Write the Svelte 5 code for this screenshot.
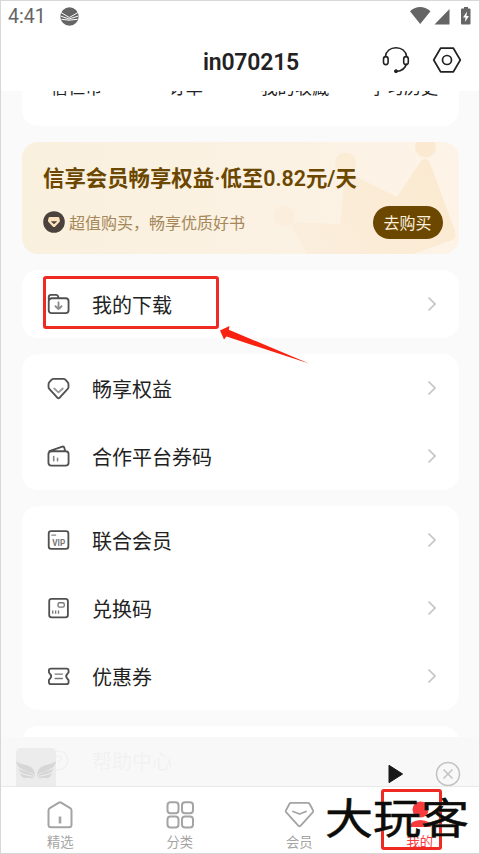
<script>
    const shortcuts = ['信仁币', '订单', '我的收藏', '学习历史'];

    const groups = [
        [{ icon: 'download', label: '我的下载' }],
        [
            { icon: 'diamond', label: '畅享权益' },
            { icon: 'wallet', label: '合作平台券码' }
        ],
        [
            { icon: 'vip', label: '联合会员' },
            { icon: 'code', label: '兑换码' },
            { icon: 'coupon', label: '优惠券' }
        ],
        [{ icon: 'help', label: '帮助中心' }]
    ];

    const tabs = [
        { icon: 'home', label: '精选' },
        { icon: 'grid', label: '分类' },
        { icon: 'member', label: '会员' },
        { icon: 'me', label: '我的', active: true }
    ];
</script>

{#snippet wing()}
    <path d="M0 0c4 4 12 3 16 7 2 2 3 4 3 9-1-3-3-4-6-5C7 9 1 7 0 0z" />
    <path d="M2 7c3 3 9 3 12 5 3 1 4 3 4 5-3-4-6-3-9-4-4-1-6-3-7-6z" />
    <path d="M4 12c3 2 6 2 9 3 2 0 4 1 4 3-3-2-5-1-7-1-4 0-5-2-6-5z" />
{/snippet}

<div class="screen">
    <header>
        <div class="status">
            <span class="time">4:41</span>
            <svg viewBox="0 0 19 19" width="19" height="19">
                <circle cx="9.5" cy="9.5" r="9.2" fill="#656565" />
                <path d="M1 5.500L9.300 10.500 18 5.500M.5 9l8.500 3 9.500-3M1.500 12.300l7.500.9 8.500-.9" fill="none" stroke="#fff" stroke-width="1" />
            </svg>
            <svg class="signals" viewBox="0 0 62 20" width="62" height="20">
                <path fill="#656565" d="M0 5.2Q10 -3 20.500 5.200L10.200 18zM24.500 18.500L39.500 3v15.500zM52 2.500h2V1h4v1.500h1.500q1 0 1 1v14q0 1-1 1h-7.500q-1 0-1-1v-14q0-1 1-1z" />
                <path fill="#fff" d="M57 5.500L53 11.500h2.500l-.5 4.500 4-6h-2.500z" />
            </svg>
        </div>
        <div class="titlebar">
            <h1>in070215</h1>
            <svg class="headset" viewBox="0 0 28 28" width="28" height="28" fill="none" stroke="#222" stroke-width="1.600">
                <path d="M3.200 11C4 5 8.500 1.800 14 1.800S24 5 24.800 11M24.600 17.500c-1.200 4.600-4.600 7.500-10.200 8" />
                <rect x="1.500" y="10.600" width="4.600" height="8" rx="2.300" />
                <rect x="21.700" y="10.600" width="4.600" height="8" rx="2.300" />
                <circle cx="14" cy="25.200" r="1.500" fill="#222" stroke-width="1" />
            </svg>
            <svg viewBox="0 0 30 28" width="30" height="28" fill="none" stroke="#222" stroke-width="1.700" stroke-linejoin="round">
                <path d="M8.600 2.200h12.800L28.300 14l-6.900 11.800H8.600L1.700 14z" />
                <circle cx="15" cy="14" r="4.500" />
            </svg>
        </div>
    </header>

    <main>
        <section class="card shortcuts">
            {#each shortcuts as name}
                <span>{name}</span>
            {/each}
        </section>

        <section class="banner">
            <svg class="crown" viewBox="0 0 186 112" width="186" height="112">
                <defs>
                    <linearGradient id="crown" gradientUnits="userSpaceOnUse" x1="20" y1="100" x2="150" y2="10">
                        <stop offset="0" stop-color="#fbeedd" />
                        <stop offset="1" stop-color="#fbead1" />
                    </linearGradient>
                </defs>
                <g fill="url(#crown)">
                    <path d="M16 80l51 2 5-50q3-3 8 1l44 22 24-36q5-5 9 2l25 68q2 8-5 10L140 112H34z" />
                    <circle cx="11" cy="74" r="10.500" />
                    <circle cx="72.500" cy="21" r="10.500" />
                    <circle cx="152.500" cy="5" r="10.500" />
                </g>
            </svg>
            <h2>信享会员畅享权益·低至0.82元/天</h2>
            <div class="offer">
                <svg viewBox="0 0 22 22" width="22" height="22">
                    <circle cx="11" cy="11" r="10.800" fill="#4b423d" />
                    <path fill="#fce3bd" fill-rule="evenodd" d="M7 6h8q1 0 1.300.8l.6 2.700q.2.800-.5 1.500L12 15.700q-1 .8-2 0L5.500 11q-.7-.7-.5-1.500l.6-2.700Q6 6 7 6zM7.800 10.200L11 13.300l3.200-3.100z" />
                </svg>
                <span>超值购买，畅享优质好书</span>
                <button>去购买</button>
            </div>
        </section>

        {#each groups as group}
            <section class="card">
                {#each group as item}
                    <div class="row">
                        <svg class="icon" viewBox="0 0 24 24" width="23" height="23" fill="none" stroke="#505050" stroke-width="1.900" stroke-linejoin="round" stroke-linecap="round">
                            {#if item.icon === 'download'}
                                <path d="M1.800 6.500V4.500q0-2.500 2.500-2.500h5.200q1.500 0 2 1.300l.8 2.200h7.200q3 0 3 3v9.500q0 3-3 3H4.800q-3 0-3-3V8.500q0-2.500 3-3h7" />
                                <path stroke="#8b8b8b" d="M12 9.500v7M8.800 13.800l3.200 3 3.200-3" />
                            {:else if item.icon === 'diamond'}
                                <path d="M6.800 2h10.400q1.200 0 2 .8l2.300 2.600q.9 1 .9 2.200v3q0 1-.8 1.700L13 21.800q-1 .9-2 0L2.400 12.300q-.8-.7-.8-1.700v-3q0-1.200.9-2.200l2.300-2.600q.8-.8 2-.8z" />
                                <path stroke="#999" d="M7.500 12L12 16l4.500-4" />
                            {:else if item.icon === 'wallet'}
                                <path d="M2.500 6.500L16 1.700q1.500-.4 2 1L19 6.500M5 6.500h14.500q3 0 3 3v9q0 3-3 3h-15q-3 0-3-3v-9q0-3 3.500-3z" />
                                <path stroke="#888" stroke-width="1.700" d="M7 12v4.500M11 14v2.500" />
                            {:else if item.icon === 'vip'}
                                <rect x="1.800" y="2.300" width="20.500" height="18.500" rx="2.500" />
                                <path stroke="#888" stroke-width="1.300" d="M5 6.500h4" />
                                <text x="12.300" y="17.700" text-anchor="middle">VIP</text>
                            {:else if item.icon === 'code'}
                                <rect x="2.300" y="2" width="19.500" height="19.200" rx="2.500" />
                                <rect stroke="#777" stroke-width="1.400" x="11.500" y="6" width="6.500" height="4.500" rx="1.500" />
                                <path stroke="#777" stroke-width="1.400" stroke-linecap="butt" d="M6 14v3.500M9 14v3.500M12 14v3.500" />
                            {:else if item.icon === 'coupon'}
                                <path d="M4 3.800h16.500q2 0 2 2v2l-1.500 1.700q-2 2.200 0 4.400l1.500 1.800v2.200q0 2-2 2H4q-2 0-2-2v-2.200l1.400-1.800q2-2.200 0-4.400L2 7.800v-2q0-2 2-2z" />
                                <path stroke="#777" stroke-width="1.500" d="M8.500 9.500h7.500M8.500 14h7.500" />
                            {:else}
                                <circle cx="12" cy="12" r="9.800" />
                                <path d="M9 10q0-3 3-3t3 3q0 1.500-3 3v1" />
                            {/if}
                        </svg>
                        <span>{item.label}</span>
                        <svg class="chevron" viewBox="0 0 10 16" width="10" height="16">
                            <path d="M1.500 1.500L8 8l-6.500 6.500" fill="none" stroke="#c4c4c4" stroke-width="1.700" />
                        </svg>
                    </div>
                {/each}
            </section>
        {/each}
    </main>

    <footer>
        <div class="player">
            <div class="cover">
                <svg viewBox="0 0 40 20" width="40" height="20" fill="#d6d6d6">
                    {@render wing()}
                    <g transform="translate(40 0) scale(-1 1)">{@render wing()}</g>
                </svg>
            </div>
            <svg class="play" viewBox="0 0 16 20" width="16" height="20">
                <path d="M1 1.300L14.600 10 1 18.700z" fill="#181818" stroke="#181818" stroke-width="1" stroke-linejoin="round" />
            </svg>
            <svg class="close" viewBox="0 0 26 26" width="26" height="26" fill="none" stroke="#c2c2c2" stroke-width="1.500">
                <circle cx="13" cy="13" r="11.500" />
                <path d="M8.500 8.500l9 9M17.500 8.500l-9 9" />
            </svg>
        </div>
        <nav>
            {#each tabs as tab}
                <div class="tab" class:active={tab.active}>
                    <svg viewBox="0 0 30 30" width="30" height="30" fill="none" stroke="#a4a4a4" stroke-width="2" stroke-linejoin="round" stroke-linecap="round">
                        {#if tab.icon === 'home'}
                            <path d="M3.500 10.500q0-1.500 1.300-2.300l8.700-5.400q1.500-.9 3 0l8.700 5.400q1.300.8 1.300 2.300v14.300q0 2.500-2.500 2.500H6q-2.500 0-2.500-2.500z" />
                            <path stroke-width="2.600" stroke-linecap="butt" d="M15 16.500v7" />
                        {:else if tab.icon === 'grid'}
                            <rect x="2.500" y="2.300" width="11" height="11" rx="3" />
                            <rect x="17" y="2.300" width="11" height="11" rx="3" />
                            <rect x="2.500" y="16.500" width="11" height="11" rx="3" />
                            <rect x="17" y="16.500" width="11" height="11" rx="3" />
                        {:else if tab.icon === 'member'}
                            <path stroke-width="1.800" d="M7 2.900h17q1 0 1.500.8l3.500 6.500q.7 1.200-.3 2.200L16.500 25.800q-1 1-2 0L2.300 12.400q-1-1-.3-2.200l3.500-6.500q.5-.8 1.500-.8z" />
                            <path stroke-width="1.800" d="M9 11.500l6.500 2.500 6.500-2.500" />
                        {:else}
                            <circle cx="15.500" cy="9.500" r="8" fill="#f93b3e" stroke="none" />
                            <path d="M5 27q0-6.500 10.500-7 10.500.5 10.500 7z" fill="#f93b3e" stroke="none" />
                        {/if}
                    </svg>
                    <span>{tab.label}</span>
                </div>
            {/each}
        </nav>
    </footer>

    <div class="mark row-mark"></div>
    <svg class="arrow" viewBox="0 0 90 42" width="90" height="42">
        <path fill="#f9210f" d="M0 4.500L9.500 0l-.7 3.700L89 37.500 6.500 10.500 4 13.500z" />
    </svg>
    <div class="mark tab-mark"></div>
    <div class="watermark">大玩客</div>
</div>

<style>
    :global(body) {
        margin: 0;
    }

    .screen {
        position: relative;
        box-sizing: border-box;
        width: 480px;
        height: 854px;
        display: flex;
        flex-direction: column;
        overflow: hidden;
        border: 1px solid #d7d7d7;
        background: #fafafa;
        font-family: Roboto, "Noto Sans CJK SC", sans-serif;
    }

    header {
        flex: none;
        height: 90px;
        background: #fff;
    }

    .status {
        display: flex;
        align-items: center;
        height: 30px;
        padding: 0 8px 0 7px;
        color: #656565;
    }

    .time {
        font-size: 19.5px;
        line-height: 30px;
        padding-top: 1px;
    }

    .status svg {
        margin-left: 14px;
    }

    .status .signals {
        margin-left: auto;
        margin-right: -1px;
    }

    .titlebar {
        display: flex;
        align-items: center;
        height: 58px;
        padding-right: 17px;
    }

    h1 {
        width: 180px;
        margin: 6px 0 0 160px;
        text-align: center;
        font-size: 23px;
        font-weight: 600;
        line-height: 30px;
        letter-spacing: -0.2px;
        color: #222;
    }

    .headset {
        margin-left: auto;
        margin-right: 22px;
    }

    main {
        flex: 1;
        min-height: 0;
        overflow: hidden;
        padding: 0 20.5px 0 21px;
        display: flex;
        flex-direction: column;
        gap: 16px;
    }

    .card {
        flex: none;
        background: #fff;
        border-radius: 16px;
    }

    .shortcuts {
        display: flex;
        height: 35.4px;
        border-radius: 0 0 16px 16px;
        overflow: hidden;
    }

    .shortcuts span {
        flex: 1;
        margin-top: -15px;
        text-align: center;
        font-size: 17.2px;
        line-height: 24px;
        color: #222;
    }

    .banner {
        position: relative;
        flex: none;
        box-sizing: border-box;
        height: 112px;
        padding: 22px 16px 0 21px;
        border-radius: 16px;
        overflow: hidden;
        background: linear-gradient(90deg, #f9f0de, #fdf3e7);
    }

    .crown {
        position: absolute;
        right: 0;
        top: 0;
    }

    h2 {
        position: relative;
        margin: 0;
        font-size: 21.4px;
        font-weight: 600;
        line-height: 30px;
        white-space: nowrap;
        color: #6b4700;
    }

    .offer {
        position: relative;
        display: flex;
        align-items: center;
        height: 34px;
        margin-top: 11px;
        font-size: 16px;
        color: #a5875a;
    }

    .offer span {
        margin-left: 4px;
    }

    .offer button {
        width: 70px;
        height: 33px;
        margin-left: auto;
        padding: 0;
        border: none;
        border-radius: 17px;
        background: #6b4700;
        color: #fdf0dc;
        font: inherit;
    }

    .row {
        display: flex;
        align-items: center;
        height: 68px;
        padding: 0 22px 0 25px;
        font-size: 20px;
        color: #222;
    }

    .row span {
        margin-left: 22px;
    }

    .icon text {
        font: 700 8.5px Roboto, sans-serif;
        fill: #777;
        stroke: none;
    }

    .chevron {
        margin-left: auto;
    }

    footer {
        position: absolute;
        left: 0;
        right: 0;
        bottom: 0;
    }

    .player {
        display: flex;
        align-items: flex-start;
        height: 49px;
        padding: 0 18px 0 15px;
        background: rgba(248, 248, 248, 0.97);
        overflow: hidden;
    }

    .cover {
        width: 40px;
        height: 40px;
        margin-top: 11px;
        border-radius: 5px 5px 0 0;
        background: #ececec;
    }

    .cover svg {
        margin-top: 13px;
    }

    .play {
        margin: 27px 31px 0 auto;
    }

    .close {
        margin-top: 24px;
    }

    nav {
        display: flex;
        height: 66px;
        border-top: 1px solid #e9e9e9;
        background: #fff;
    }

    .tab {
        flex: 1;
        display: flex;
        flex-direction: column;
        align-items: center;
        padding: 13px 1px 0 0;
        font-size: 13.3px;
        line-height: 20px;
        color: #a4a4a4;
    }

    .tab span {
        margin-top: 3px;
    }

    .tab.active {
        padding: 13px 0 0 1px;
        color: #f93b3e;
    }

    .mark {
        position: absolute;
        box-sizing: border-box;
        border: 3px solid #ee2a22;
        border-radius: 3px;
    }

    .row-mark {
        left: 42px;
        top: 275px;
        width: 176px;
        height: 53px;
    }

    .tab-mark {
        left: 380px;
        top: 788px;
        width: 61px;
        height: 61px;
    }

    .arrow {
        position: absolute;
        left: 219px;
        top: 325px;
    }

    .watermark {
        position: absolute;
        left: 324px;
        top: 787px;
        font-size: 48px;
        font-weight: 400;
        line-height: 64px;
        white-space: nowrap;
        color: #0c0c0c;
        -webkit-text-stroke: 0.5px #0c0c0c;
        text-shadow: 0 0 1px #b9ad84;
        transform: scaleY(0.87);
    }
</style>
